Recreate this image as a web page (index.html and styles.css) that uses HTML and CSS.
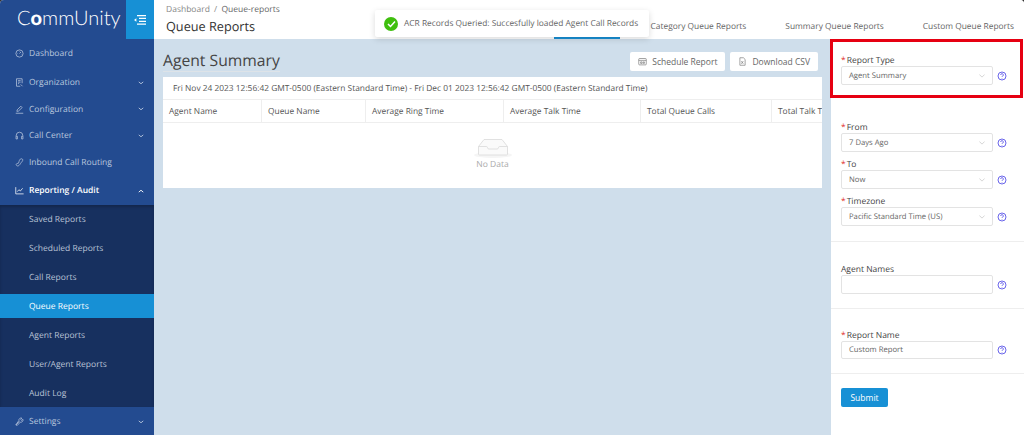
FILE: index.html
```html
<!DOCTYPE html>
<html lang="en">
<head>
    <meta charset="UTF-8">
    <meta name="viewport" content="width=device-width, initial-scale=1.0">
    <title>Queue Reports</title>
    <link rel="stylesheet" href="styles.css">
</head>
<body>
    <div class="app">
        <aside class="sidebar">
            <div class="brand">
                <div class="logo">C<b>o</b>mmUnity</div>
                <div class="collapse-btn">
                    <svg width="12" height="10" viewBox="0 0 12 10" fill="none" stroke="#fff" stroke-width="1.2"><path d="M3 .6h9M5 3.4h7M5 6.4h7M3 9.2h9"/><path d="M0 5l2.4-1.8v3.6z" fill="#fff" stroke="none"/></svg>
                </div>
            </div>
            <nav class="nav">
                <a class="nav-item gap-after">
                    <svg class="nav-icon" viewBox="0 0 12 12"><circle cx="6" cy="6" r="4.8"/><path d="M6 6l2-2M3 6h.6M8.6 7H9M6 2.6v.6"/></svg>
                    <span>Dashboard</span>
                </a>
                <a class="nav-item">
                    <svg class="nav-icon" viewBox="0 0 12 12"><path d="M7 11H2V1h7.5v6M4 3.5h3.5M4 5.5h3.5M4 7.5h1.5M7.5 8.5l2.5 2.5"/></svg>
                    <span>Organization</span>
                    <svg class="chevron" viewBox="0 0 8 5"><path d="M1 1l3 2.5L7 1"/></svg>
                </a>
                <a class="nav-item">
                    <svg class="nav-icon" viewBox="0 0 12 12"><path d="M1 11h10M2.5 8.5l.4-2L7.8 1.6l1.8 1.8-4.9 4.7z"/></svg>
                    <span>Configuration</span>
                    <svg class="chevron" viewBox="0 0 8 5"><path d="M1 1l3 2.5L7 1"/></svg>
                </a>
                <a class="nav-item">
                    <svg class="nav-icon" viewBox="0 0 12 12"><path d="M1.6 7V6a4.4 4.4 0 0 1 8.8 0v1M1.4 7h1.8v3.6H1.4zM8.8 7h1.8v3.6H8.8z"/></svg>
                    <span>Call Center</span>
                    <svg class="chevron" viewBox="0 0 8 5"><path d="M1 1l3 2.5L7 1"/></svg>
                </a>
                <a class="nav-item">
                    <svg class="nav-icon" viewBox="0 0 12 12"><path d="M7.2 1.4c1-.9 3-.2 3.2 1 .2 1.400-1.800 3-3 5-1.100 1.800-2.400 3.300-4 3.200-1.300-.1-2.300-1.500-1.700-2.500.5-.8 1.700-1.100 2.400-.6l1.300-2.400C5 4.800 6 2.500 7.200 1.400z"/></svg>
                    <span>Inbound Call Routing</span>
                </a>
                <a class="nav-item open">
                    <svg class="nav-icon" viewBox="0 0 12 12"><path d="M1 1.500V10.500H11.500M3 7.500l2.200-2.500 2 1.600 3-3.600"/></svg>
                    <span>Reporting / Audit</span>
                    <svg class="chevron" viewBox="0 0 8 5"><path d="M1 4l3-2.500L7 4"/></svg>
                </a>
                <div class="submenu">
                    <a class="sub-item">Saved Reports</a>
                    <a class="sub-item">Scheduled Reports</a>
                    <a class="sub-item">Call Reports</a>
                    <a class="sub-item active">Queue Reports</a>
                    <a class="sub-item">Agent Reports</a>
                    <a class="sub-item">User/Agent Reports</a>
                    <a class="sub-item">Audit Log</a>
                </div>
                <a class="nav-item">
                    <svg class="nav-icon" viewBox="0 0 12 12"><path d="M1.500 10.500l4.400-4.700M5.200 4.800a3 3 0 0 1 4-3.300L7.600 3.300l1.300 1.300 1.700-1.500a3 3 0 0 1-3.600 3.800L3 11.200l-2-.6z"/></svg>
                    <span>Settings</span>
                    <svg class="chevron" viewBox="0 0 8 5"><path d="M1 1l3 2.500L7 1"/></svg>
                </a>
            </nav>
        </aside>

        <div class="main">
            <header class="topbar">
                <div class="heading">
                    <div class="breadcrumb">Dashboard <i>/</i> <em>Queue-reports</em></div>
                    <div class="page-title">Queue Reports</div>
                </div>
                <div class="tabs">
                    <a class="tab">Category Queue Reports</a>
                    <a class="tab">Summary Queue Reports</a>
                    <a class="tab">Custom Queue Reports</a>
                </div>
                <div class="tab-underline"></div>
            </header>

            <div class="body">
                <section class="content">
                    <div class="content-head">
                        <h2 class="summary-title">Agent Summary</h2>
                        <div class="actions">
                            <button class="btn">
                                <svg class="btn-icon" viewBox="0 0 12 12"><rect x="1" y="2" width="10" height="8.500" rx="1"/><path d="M1 4.500h10M3.500 6.500h2v2h-2zM7 6.500h1.500v2H7z"/></svg>
                                Schedule Report
                            </button>
                            <button class="btn">
                                <svg class="btn-icon" viewBox="0 0 12 12"><path d="M2.500 1h4.700l2.300 2.300V11h-7zM4.500 5.500l2.500 3.500M7 5.500L4.500 9"/></svg>
                                Download CSV
                            </button>
                        </div>
                    </div>
                    <div class="card">
                        <div class="date-range">Fri Nov 24 2023 12:56:42 GMT-0500 (Eastern Standard Time) - Fri Dec 01 2023 12:56:42 GMT-0500 (Eastern Standard Time)</div>
                        <div class="table-head">
                            <div class="col col-1">Agent Name</div>
                            <div class="col col-2">Queue Name</div>
                            <div class="col col-3">Average Ring Time</div>
                            <div class="col col-4">Average Talk Time</div>
                            <div class="col col-5">Total Queue Calls</div>
                            <div class="col col-6">Total Talk Time</div>
                        </div>
                        <div class="empty">
                            <svg width="40" height="21" viewBox="0 0 40 21">
                                <ellipse cx="20" cy="18" rx="19" ry="3" fill="#f5f5f5"/>
                                <path d="M5.500 9.500L11 2.500h18l5.500 7V17a1 1 0 0 1-1 1h-27a1 1 0 0 1-1-1z" fill="#fafafa" stroke="#d9d9d9" stroke-width=".8"/>
                                <path d="M5.500 9.500h8c.6 0 1 .6 1 1.200s.6 1.300 1.300 1.300h8.400c.7 0 1.300-.7 1.300-1.300s.4-1.200 1-1.200h8" fill="none" stroke="#d9d9d9" stroke-width=".8"/>
                            </svg>
                            <div class="empty-text">No Data</div>
                        </div>
                    </div>
                </section>

                <aside class="panel">
                    <div class="highlight"></div>
                    <div class="section section-type">
                        <label class="field-label"><i>*</i>Report Type</label>
                        <div class="field-row">
                            <div class="select">Agent Summary<svg class="select-arrow" viewBox="0 0 8 5"><path d="M.5.500L4 4 7.500.500"/></svg></div>
                            <svg class="help" viewBox="0 0 10 10"><circle cx="5" cy="5" r="4"/><path d="M3.700 4a1.300 1.300 0 1 1 1.900 1.100c-.4.200-.6.500-.6.900M5 7v.5"/></svg>
                        </div>
                    </div>
                    <div class="section section-range">
                        <label class="field-label"><i>*</i>From</label>
                        <div class="field-row">
                            <div class="select">7 Days Ago<svg class="select-arrow" viewBox="0 0 8 5"><path d="M.5.500L4 4 7.500.500"/></svg></div>
                            <svg class="help" viewBox="0 0 10 10"><circle cx="5" cy="5" r="4"/><path d="M3.700 4a1.300 1.300 0 1 1 1.900 1.100c-.4.200-.6.500-.6.900M5 7v.5"/></svg>
                        </div>
                        <label class="field-label"><i>*</i>To</label>
                        <div class="field-row">
                            <div class="select">Now<svg class="select-arrow" viewBox="0 0 8 5"><path d="M.5.500L4 4 7.500.500"/></svg></div>
                            <svg class="help" viewBox="0 0 10 10"><circle cx="5" cy="5" r="4"/><path d="M3.700 4a1.300 1.300 0 1 1 1.900 1.100c-.4.200-.6.500-.6.900M5 7v.5"/></svg>
                        </div>
                        <label class="field-label"><i>*</i>Timezone</label>
                        <div class="field-row">
                            <div class="select">Pacific Standard Time (US)<svg class="select-arrow" viewBox="0 0 8 5"><path d="M.5.500L4 4 7.500.500"/></svg></div>
                            <svg class="help" viewBox="0 0 10 10"><circle cx="5" cy="5" r="4"/><path d="M3.700 4a1.300 1.300 0 1 1 1.900 1.100c-.4.200-.6.500-.6.900M5 7v.5"/></svg>
                        </div>
                    </div>
                    <div class="section section-agents">
                        <label class="field-label">Agent Names</label>
                        <div class="field-row">
                            <div class="select"></div>
                            <svg class="help" viewBox="0 0 10 10"><circle cx="5" cy="5" r="4"/><path d="M3.700 4a1.300 1.300 0 1 1 1.900 1.100c-.4.200-.6.500-.6.900M5 7v.5"/></svg>
                        </div>
                    </div>
                    <div class="section section-name">
                        <label class="field-label"><i>*</i>Report Name</label>
                        <div class="field-row">
                            <div class="select input-short">Custom Report</div>
                            <svg class="help" viewBox="0 0 10 10"><circle cx="5" cy="5" r="4"/><path d="M3.700 4a1.300 1.300 0 1 1 1.900 1.100c-.4.200-.6.500-.6.900M5 7v.5"/></svg>
                        </div>
                    </div>
                    <div class="submit-wrap">
                        <button class="submit">Submit</button>
                    </div>
                </aside>
            </div>
        </div>

        <div class="toast">
            <span class="toast-check">
                <svg width="9" height="8" viewBox="0 0 9 8" fill="none" stroke="#fff" stroke-width="1.500"><path d="M1 4l2.500 2.500L8 1.500"/></svg>
            </span>
            ACR Records Queried: Succesfully loaded Agent Call Records
        </div>
    </div>
</body>
</html>
```

FILE: styles.css
```css
* {
    box-sizing: border-box;
}
html, body {
    margin: 0;
    height: 100%;
    overflow: hidden;
    background: #333;
}
body {
    font-family: "Open Sans", Arial, sans-serif;
    font-size: 8.4px;
    color: #555;
    text-rendering: geometricPrecision;
}
.app {
    position: relative;
    display: flex;
    width: 1024px;
    height: 435px;
    overflow: hidden;
    border-radius: 4px 4px 0 0;
    background: #fff;
}

/* sidebar */
.sidebar {
    width: 154px;
    flex: none;
    background: #234b90;
}
.brand {
    display: flex;
    justify-content: space-between;
    height: 39px;
}
.logo {
    padding: 6px 0 0 17px;
    font-family: Lato, "Open Sans", sans-serif;
    font-size: 20px;
    font-weight: 300;
    color: #fff;
}
.logo b {
    font-weight: 900;
}
.collapse-btn {
    width: 28px;
    background: #1790d5;
    display: flex;
    align-items: center;
    justify-content: center;
}
.nav {
    display: flex;
    flex-direction: column;
    padding-top: 1px;
}
.nav-item {
    display: flex;
    align-items: center;
    height: 26.5px;
    padding: 1px 10px 0 15px;
    color: #b9c7de;
    font-size: 8.5px;
}
.nav-item span {
    flex: 1;
}
.gap-after {
    margin-bottom: 2.5px;
}
.open {
    margin-top: 2px;
    color: #fff;
    font-weight: 600;
}
.nav-icon {
    width: 9px;
    height: 9px;
    margin-right: 5px;
    fill: none;
    stroke: currentColor;
    stroke-width: 1;
}
.chevron {
    width: 6px;
    height: 4px;
    fill: none;
    stroke: currentColor;
    stroke-width: 1.200;
}
.submenu {
    display: flex;
    flex-direction: column;
    gap: 5px;
    margin-top: 1px;
    padding: 2px 0;
    margin-bottom: 1.500px;
    background: #17305f;
    box-shadow: inset 0 2px 3px rgba(0, 0, 0, 0.2);
}
.sub-item {
    display: flex;
    align-items: center;
    height: 24px;
    padding: 1px 0 0 29px;
    color: #b9c3d6;
    font-size: 8.5px;
}
.sub-item.active {
    background: #1790d5;
    color: #fff;
}

/* top bar */
.main {
    flex: 1;
    display: flex;
    flex-direction: column;
    min-width: 0;
}
.topbar {
    position: relative;
    display: flex;
    justify-content: space-between;
    height: 39px;
    background: #fff;
}
.heading {
    padding: 3px 0 0 12px;
}
.breadcrumb {
    font-size: 8.5px;
    line-height: 13px;
    color: #888;
}
.breadcrumb i {
    font-style: normal;
    margin: 0 2px;
}
.breadcrumb em {
    font-style: normal;
    color: #666;
}
.page-title {
    margin-top: 1px;
    font-size: 12.700px;
    line-height: 18px;
    color: #333;
}
.tabs {
    display: flex;
    gap: 39px;
    padding: 21px 10px 0 0;
    font-size: 8.4px;
    line-height: 12px;
    color: #666;
}
.tab-underline {
    position: absolute;
    left: 400px;
    bottom: 0;
    width: 66px;
    height: 2px;
    background: #1790d5;
}

/* main content */
.body {
    flex: 1;
    display: flex;
    min-height: 0;
}
.content {
    flex: 1;
    min-width: 0;
    padding: 0 9px 0 9px;
    background: #cfdeeb;
}
.content-head {
    display: flex;
    justify-content: space-between;
    height: 38px;
}
.summary-title {
    margin: 10px 0 0;
    height: 23px;
    font-size: 15.700px;
    font-weight: 400;
    line-height: 22px;
    color: #444;
    border-bottom: 1px solid #dde3e8;
}
.actions {
    display: flex;
    gap: 5px;
    padding: 13px 4px 0 0;
}
.btn {
    display: flex;
    align-items: center;
    gap: 5px;
    height: 19px;
    padding: 0 8px;
    border: 0;
    border-radius: 2px;
    background: #fff;
    font-family: inherit;
    font-size: 8.5px;
    color: #666;
}
.btn-icon {
    width: 9px;
    height: 9px;
    fill: none;
    stroke: #777;
    stroke-width: 0.900;
}
.card {
    width: 659px;
    height: 111px;
    background: #fff;
    overflow: hidden;
}
.date-range {
    height: 23px;
    padding: 0 10px;
    border-bottom: 1px solid #eee;
    line-height: 23px;
    white-space: nowrap;
}
.table-head {
    display: flex;
    height: 23px;
    border-bottom: 1px solid #eee;
    white-space: nowrap;
}
.col {
    flex: none;
    padding-left: 6px;
    line-height: 23px;
    border-left: 1px solid #eee;
}
.col-1 {
    width: 98px;
    border-left: 0;
}
.col-2 {
    width: 104px;
}
.col-3 {
    width: 138px;
}
.col-4 {
    width: 137px;
}
.col-5 {
    width: 131px;
}
.col-6 {
    width: 51px;
    overflow: hidden;
}
.empty {
    display: flex;
    flex-direction: column;
    align-items: center;
    padding-top: 14px;
}
.empty-text {
    margin-top: 1px;
    font-size: 8.5px;
    line-height: 12px;
    color: #aaa;
}

/* filter panel */
.panel {
    position: relative;
    width: 193px;
    flex: none;
    background: #fff;
}
.highlight {
    position: absolute;
    left: -1px;
    top: 0;
    width: 193px;
    height: 59px;
    border: 3px solid #e60012;
}
.section {
    padding: 0 0 0 10px;
    border-bottom: 1px solid #eee;
}
.section-type {
    height: 59px;
    padding-top: 16px;
    border-bottom: 0;
}
.section-range {
    height: 144px;
    padding-top: 24px;
}
.section-agents {
    height: 67px;
    padding-top: 22px;
}
.section-name {
    height: 65px;
    padding-top: 21px;
}
.field-label {
    display: block;
    height: 11px;
    line-height: 12px;
    font-size: 8.5px;
    color: #444;
}
.field-label i {
    font-style: normal;
    color: #e02020;
    margin-right: 1px;
}
.field-row {
    display: flex;
    align-items: center;
    gap: 4px;
    margin-bottom: 7px;
}
.select {
    position: relative;
    width: 152px;
    height: 19px;
    padding-left: 7px;
    border: 1px solid #e3e3e3;
    border-radius: 2px;
    line-height: 18px;
    font-size: 7.700px;
    color: #666;
}
.input-short {
    height: 18px;
    line-height: 17px;
}
.select-arrow {
    position: absolute;
    right: 7px;
    top: 7px;
    width: 6px;
    height: 4px;
    fill: none;
    stroke: #bbb;
    stroke-width: 0.800;
}
.help {
    width: 10px;
    height: 10px;
    flex: none;
    fill: none;
    stroke: #5a55e8;
    stroke-width: 0.900;
}
.submit-wrap {
    padding: 14px 0 0 10px;
}
.submit {
    width: 47px;
    height: 19px;
    border: 0;
    border-radius: 2px;
    background: #1790d5;
    color: #fff;
    font-family: inherit;
    font-size: 8.5px;
}

/* toast */
.toast {
    position: absolute;
    left: 375px;
    top: 10px;
    display: flex;
    align-items: center;
    gap: 6px;
    width: 274px;
    height: 27px;
    padding-left: 9px;
    background: #fff;
    border-radius: 2px;
    box-shadow: 0 2px 6px rgba(0, 0, 0, 0.15);
    font-size: 8.4px;
    color: #666;
    white-space: nowrap;
}
.toast-check {
    display: flex;
    align-items: center;
    justify-content: center;
    width: 14px;
    height: 14px;
    border-radius: 50%;
    background: #3fbf0e;
}
```
